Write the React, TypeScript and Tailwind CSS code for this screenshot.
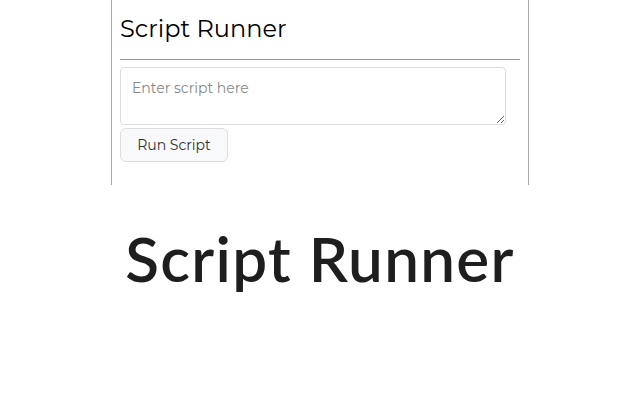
export default function App() {
  return (
    <div className="w-[640px] h-[400px] bg-white flex flex-col items-center" style={{ fontFamily: "Montserrat, 'Open Sans', sans-serif" }}>
      <div className="w-[418px] h-[185px] border-x border-[#aaaaaa] px-2 pt-[14px]">
        <h1 className="text-[24px] leading-[29px] text-black font-normal">Script Runner</h1>
        <div className="mt-[16px] h-px bg-[#999999]" />
        <textarea
          className="mt-[7px] block w-[386px] h-[58px] border border-[#dddddd] rounded-[4px] px-[11px] py-[10px] text-[14px] leading-[20px] placeholder:text-[#888888] outline-none"
          placeholder="Enter script here"
        />
        <button className="mt-[3px] h-[34px] w-[108px] border border-[#dddddd] rounded-[6px] bg-[#f8f9fa] text-[14px] text-[#333333]">
          Run Script
        </button>
      </div>
      <div className="mt-[42px] text-[62px] font-semibold tracking-[1.3px] text-[#1e1e1e] leading-none" style={{ fontFamily: "Lato, sans-serif" }}>
        Script Runner
      </div>
    </div>
  );
}
